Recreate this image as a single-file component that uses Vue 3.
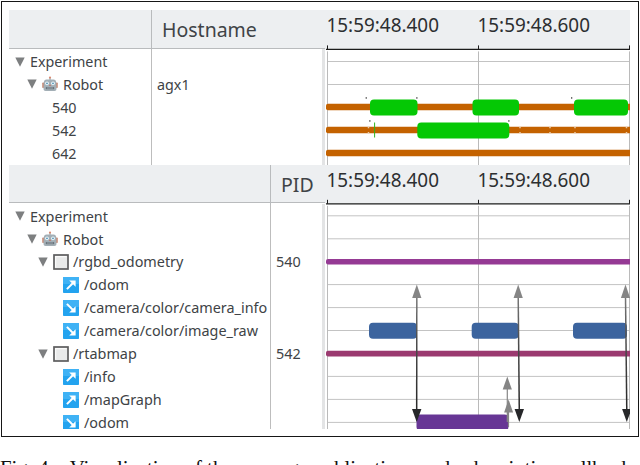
<template>
  <div class="page">
    <div class="frame">
      <section v-for="panel in panels" :key="panel.id" class="panel" :class="panel.id">
        <div class="tree">
          <div class="head">
            <div class="name-col"></div>
            <div class="value-col">{{ panel.column }}</div>
          </div>
          <div class="rows">
            <div v-for="(row, i) in panel.rows" :key="i" class="row">
              <div class="name-col" :class="'level-' + row.level">
                <svg v-if="row.open" class="caret" viewBox="0 0 10 10">
                  <path d="M0.3 0.5H9.7L5 9.7Z" fill="#7d7f80" />
                </svg>
                <svg v-if="row.icon === 'robot'" class="icon" viewBox="0 0 16 16">
                  <path d="M8 4V1.5" stroke="#8d989f" stroke-width="1" />
                  <circle cx="8" cy="1.6" r="1.1" fill="#d98a70" />
                  <rect x="0.2" y="6.5" width="2" height="5.5" rx="0.8" fill="#c98d78" />
                  <rect x="13.8" y="6.5" width="2" height="5.5" rx="0.8" fill="#c98d78" />
                  <path d="M4.5 3.5h7q2.5 0 2.7 3l.3 6.5q0 2-2 2h-9q-2 0-2-2l.3-6.5q.2-3 2.7-3z" fill="#a3afb6" />
                  <circle cx="5" cy="7.3" r="1.9" fill="#edf5f9" />
                  <circle cx="11" cy="7.3" r="1.9" fill="#edf5f9" />
                  <circle cx="5" cy="7.3" r="0.9" fill="#4b91b4" />
                  <circle cx="11" cy="7.3" r="0.9" fill="#4b91b4" />
                  <path d="M8 8.2l1 1.7H7z" fill="#c56e60" />
                  <rect x="3.8" y="11" width="8.4" height="2.3" rx="0.8" fill="#68747c" />
                  <path d="M6 11v2.3M8 11v2.3M10 11v2.3" stroke="#c2cbd0" stroke-width="0.6" />
                </svg>
                <svg v-else-if="row.icon === 'node'" class="icon" viewBox="0 0 16 16">
                  <rect x="1" y="1" width="14" height="14" fill="#e9eaea" stroke="#5d5d5e" stroke-width="1.7" />
                  <path d="M2.6 13.4V2.6H13.4" fill="none" stroke="#fafafa" stroke-width="1.2" />
                </svg>
                <svg v-else-if="row.icon" class="icon" viewBox="0 0 16 16">
                  <rect width="16" height="16" rx="0.8" fill="#23a3ef" />
                  <rect width="16" height="7" rx="0.8" fill="#3fb2f5" />
                  <g :transform="row.icon === 'sub' ? 'matrix(1 0 0 -1 0 16)' : null">
                    <path d="M3.9 12.1L10.5 5.5" stroke="#fff" stroke-width="2" />
                    <path d="M6.2 3.4H12.6V9.8Z" fill="#fff" />
                  </g>
                </svg>
                <span>{{ row.name }}</span>
              </div>
              <div class="value-col">{{ row.value }}</div>
            </div>
          </div>
        </div>
        <div class="splitter"></div>
        <svg class="chart" :viewBox="`325 ${panel.top} 305 ${panel.height}`">
          <defs>
            <linearGradient id="fade" gradientUnits="userSpaceOnUse" x1="0" y1="285" x2="0" y2="400">
              <stop offset="0" stop-color="#858585" />
              <stop offset="0.45" stop-color="#505050" />
              <stop offset="1" stop-color="#2c2c2c" />
            </linearGradient>
          </defs>
          <rect x="325" :y="panel.top" width="305" :height="panel.axis - panel.top" fill="#edeff1" />
          <text x="326.5" :y="panel.top + 22" textLength="112.5" lengthAdjust="spacingAndGlyphs">15:59:48.400</text>
          <text x="477.5" :y="panel.top + 22" textLength="112.5" lengthAdjust="spacingAndGlyphs">15:59:48.600</text>
          <line
            v-for="y in panel.lines"
            :key="'h' + y"
            x1="327"
            x2="630"
            :y1="y"
            :y2="y"
            stroke="#c3c3c3"
          />
          <line
            v-for="x in ticks"
            :key="'v' + x"
            :x1="x"
            :x2="x"
            :y1="panel.axis + 2"
            :y2="panel.top + panel.height"
            stroke="#bababa"
          />
          <path :d="`M326 ${panel.axis}H630`" stroke="#1c1c1c" stroke-width="1.3" />
          <path v-for="x in ticks" :key="'t' + x" :d="`M${x} ${panel.axis - 4}v4`" stroke="#1c1c1c" />
          <rect
            v-for="(t, i) in panel.tracks"
            :key="'k' + i"
            x="326"
            :y="t.y"
            width="306"
            :height="t.h"
            rx="2"
            :fill="t.color"
          />
          <path
            v-for="(m, i) in panel.joints"
            :key="'j' + i"
            :d="`M${m} 127v1.2M${m} 132v1.2`"
            stroke="#e8cba8"
            stroke-width="1.5"
          />
          <rect
            v-for="(b, i) in panel.bars"
            :key="'b' + i"
            :x="b.x"
            :y="b.y"
            :width="b.w"
            height="16"
            rx="4"
            :fill="b.color"
          />
          <template v-if="panel.id === 'threads'">
            <path d="M374.6 122.5v15" stroke="#30b51c" />
            <rect v-for="(d, i) in dots" :key="'d' + i" :x="d[0]" :y="d[1]" width="1.3" height="1.3" fill="#333" />
          </template>
          <template v-else>
            <g v-for="(a, i) in messages" :key="'a' + i">
              <path :d="`M${a[0]} 296L${a[1]} 412`" stroke="url(#fade)" stroke-width="1.5" />
              <path :d="`M${a[0]} 284.5l4.6 13.5h-9.2z`" fill="#858585" />
              <path :d="`M${a[1]} 422l4.7-13h-9.4z`" fill="#262729" />
            </g>
            <path d="M507.3 388V422M508.5 410V427" stroke="#858585" stroke-width="1.2" />
            <path d="M507.3 376.5l4.6 13h-9.2zM508.6 399.5l4.5 13h-9z" fill="#858585" />
          </template>
        </svg>
      </section>
    </div>
    <p class="caption">
      <span class="fig">Fig. 4.</span>
      <span>Visualization of the message publications and subscription callback</span>
    </p>
  </div>
</template>

<script setup>
// Vertical time markers shared by both panels
const ticks = [327.5, 478.5, 629.5];

const green = "#05c805";
const blue = "#3c649e";

// Small marks above the thread bars
const dots = [[365.6, 97.3], [416.2, 97.3], [571, 97.3], [369.2, 120.3], [508.2, 120.3]];

// Publication to subscription arrows: [x at top, x at bottom]
const messages = [[416.8, 416.7], [518.2, 519.3], [625.5, 626.8]];

const panels = [
  {
    id: "threads",
    column: "Hostname",
    top: 10,
    height: 155,
    axis: 49.4,
    rows: [
      { name: "Experiment", level: 0, open: true },
      { name: "Robot", level: 1, open: true, icon: "robot", value: "agx1" },
      { name: "540", level: 2 },
      { name: "542", level: 2 },
      { name: "642", level: 2 },
    ],
    lines: [61.5, 84.5],
    tracks: [
      { y: 103.7, h: 6.6, color: "#c46200" },
      { y: 126.7, h: 6.6, color: "#c46200" },
      { y: 149.7, h: 6.6, color: "#c46200" },
    ],
    joints: [368.5, 520, 550, 575, 626.5],
    bars: [
      { x: 370, y: 99.6, w: 47.5, color: green },
      { x: 472.5, y: 99.6, w: 46.5, color: green },
      { x: 574, y: 99.6, w: 54, color: green },
      { x: 417.3, y: 122.6, w: 92, color: green },
    ],
  },
  {
    id: "nodes",
    column: "PID",
    top: 165,
    height: 264,
    axis: 203.8,
    rows: [
      { name: "Experiment", level: 0, open: true },
      { name: "Robot", level: 1, open: true, icon: "robot" },
      { name: "/rgbd_odometry", level: 2, open: true, icon: "node", value: "540" },
      { name: "/odom", level: 3, icon: "pub" },
      { name: "/camera/color/camera_info", level: 3, icon: "sub" },
      { name: "/camera/color/image_raw", level: 3, icon: "sub" },
      { name: "/rtabmap", level: 2, open: true, icon: "node", value: "542" },
      { name: "/info", level: 3, icon: "pub" },
      { name: "/mapGraph", level: 3, icon: "pub" },
      { name: "/odom", level: 3, icon: "sub" },
    ],
    lines: [215.8, 238.8, 284.6, 307.6, 330.5, 376.4, 399.4, 422.4],
    tracks: [
      { y: 259, h: 5.6, color: "#953a94" },
      { y: 350.8, h: 5.6, color: "#9b3a70" },
    ],
    joints: [],
    bars: [
      { x: 369, y: 322.7, w: 48, color: blue },
      { x: 471.7, y: 322.7, w: 47, color: blue },
      { x: 573, y: 322.7, w: 54, color: blue },
      { x: 416.5, y: 414.5, w: 92, color: "#673695" },
    ],
  },
];
</script>

<style>
body {
  margin: 0;
  background: #fff;
}
</style>

<style scoped>
.page {
  width: 640px;
  height: 465px;
  box-sizing: border-box;
  padding: 1px 0 0 1px;
  overflow: hidden;
  color: #404346;
  font-family: "Noto Sans", "Open Sans", sans-serif;
}

.frame {
  box-sizing: border-box;
  width: 638px;
  height: 436px;
  padding: 8px 0 0 7px;
  border: 1px solid #161616;
}

.panel {
  display: grid;
  grid-template-columns: 313px 3px 305px;
  grid-template-rows: 100%;
  overflow: hidden;
}

.threads {
  height: 155px;
  --name-width: 142px;
}

.nodes {
  height: 264px;
  --name-width: 261px;
}

.head,
.row {
  display: grid;
  grid-template-columns: var(--name-width) 1fr;
}

.head {
  box-sizing: border-box;
  width: 316px;
  height: 39px;
  border-bottom: 1px solid #b9bbbd;
  background: #edeff1;
  font-size: 19.5px;
  line-height: 40px;
}

.nodes .head {
  height: 38px;
}

.head .value-col {
  padding-left: 10px;
  border-left: 1px solid #b9bbbd;
}

.rows {
  padding-top: 1px;
}

.nodes .rows {
  padding-top: 1.6px;
}

.row {
  height: 22.95px;
  font-size: 14.3px;
  line-height: 23px;
  white-space: nowrap;
}

.nodes .row {
  font-size: 14.4px;
}

.row:last-child {
  height: 22px;
}

.row .name-col {
  display: flex;
  align-items: center;
}

.row .value-col {
  padding-left: 5px;
  border-left: 1px solid #bdbdbd;
}

.level-0 {
  padding-left: 6px;
}

.level-1 {
  padding-left: 18px;
}

.level-2 {
  padding-left: 29px;
}

.threads .level-2 {
  padding-left: 43px;
}

.level-3 {
  padding-left: 54px;
}

.caret {
  flex: none;
  width: 10px;
  height: 10px;
  margin-right: 5px;
}

.icon {
  flex: none;
  width: 16px;
  height: 16px;
  margin-right: 5px;
}

.level-2 .icon {
  margin-right: 4px;
}

.splitter {
  margin-top: 39px;
  background: #e3e4e5;
}

.chart {
  display: block;
  width: 305px;
  height: 100%;
}

.chart text {
  font-size: 19.8px;
  fill: #2c2e30;
}

.caption {
  display: flex;
  gap: 16px;
  margin: 20px 0 0 -1px;
  color: #111;
  font-family: "Liberation Serif", serif;
  font-size: 20.8px;
  line-height: 22px;
  white-space: nowrap;
}
</style>
